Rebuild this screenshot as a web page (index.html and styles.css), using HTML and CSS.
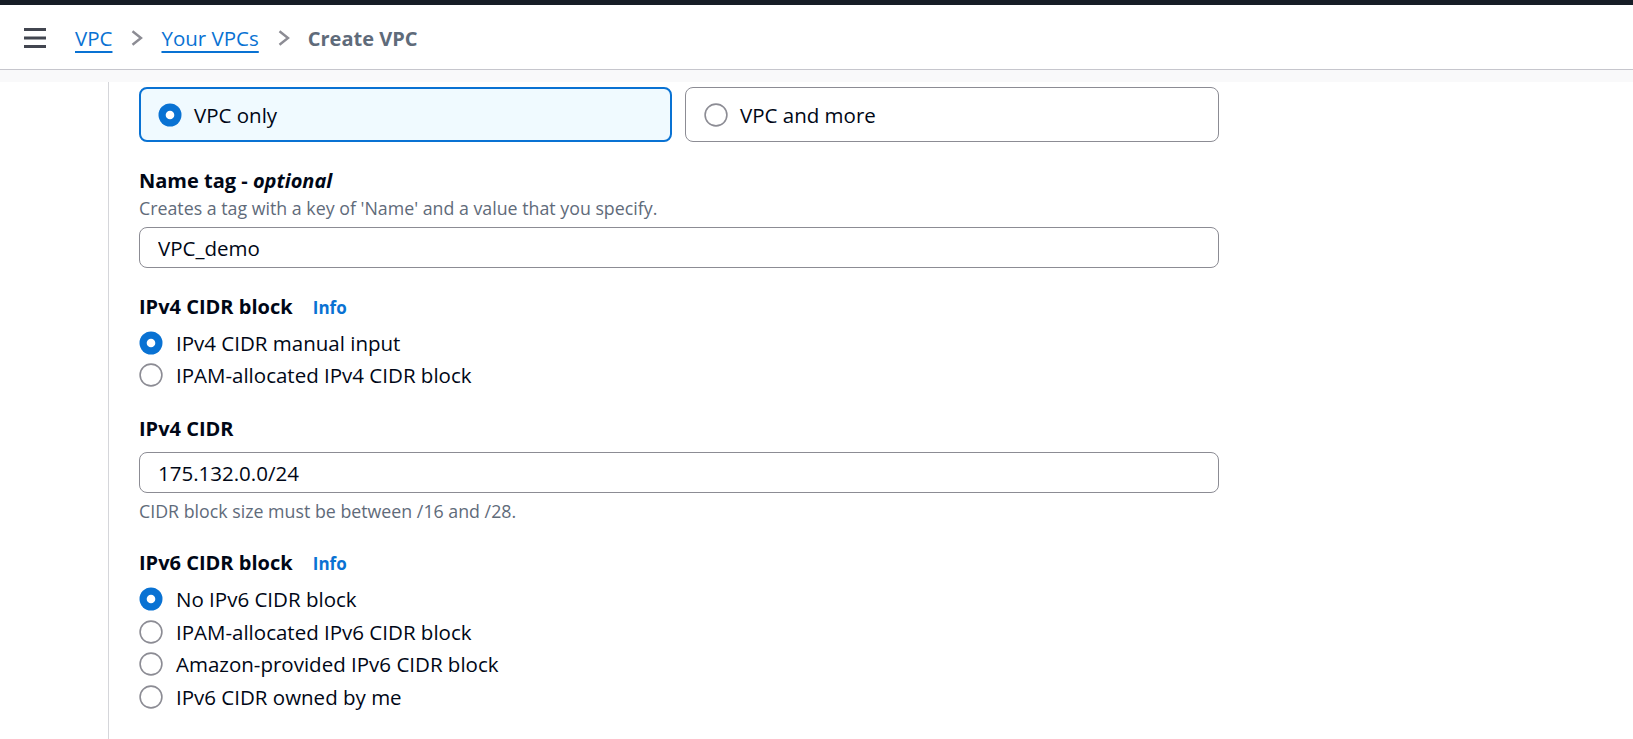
FILE: index.html
```html
<!DOCTYPE html>
<html lang="en">
<head>
<meta charset="utf-8">
<title>Create VPC</title>
<link rel="stylesheet" href="styles.css">
</head>
<body>
<div class="topbar"></div>
<header class="header">
  <svg class="menu-icon" width="22" height="20" viewBox="0 0 22 20" aria-hidden="true">
    <path d="M0 1.5H22M0 10H22M0 18.5H22" stroke="#424650" stroke-width="3" fill="none"/>
  </svg>
  <nav class="breadcrumbs">
    <a class="crumb-link" href="#">VPC</a>
    <svg class="chevron" width="12" height="16" viewBox="0 0 12 16" aria-hidden="true"><path d="M1.5 1.2L10 8L1.5 14.8" stroke="#8c8c94" stroke-width="2.4" fill="none"/></svg>
    <a class="crumb-link" href="#">Your VPCs</a>
    <svg class="chevron" width="12" height="16" viewBox="0 0 12 16" aria-hidden="true"><path d="M1.5 1.2L10 8L1.5 14.8" stroke="#8c8c94" stroke-width="2.4" fill="none"/></svg>
    <span class="crumb-current">Create VPC</span>
  </nav>
</header>
<div class="band"></div>
<main class="main">
  <div class="rail"></div>
  <section class="content">
    <div class="form">
      <div class="tiles">
        <div class="tile tile-selected">
          <svg class="radio" width="24" height="24" viewBox="0 0 24 24"><circle cx="12" cy="12" r="11.5" fill="#0972d3"/><circle cx="12" cy="12" r="4.3" fill="#fff"/></svg>
          <span class="radio-label">VPC only</span>
        </div>
        <div class="tile">
          <svg class="radio" width="24" height="24" viewBox="0 0 24 24"><circle cx="12" cy="12" r="10.9" fill="#fff" stroke="#8c8c94" stroke-width="1.6"/></svg>
          <span class="radio-label">VPC and more</span>
        </div>
      </div>

      <div class="field field-name">
        <div class="label">Name tag - <em>optional</em></div>
        <div class="description">Creates a tag with a key of 'Name' and a value that you specify.</div>
        <input class="text-input input-name" type="text" value="VPC_demo" readonly>
      </div>

      <div class="field field-ipv4">
        <div class="label">IPv4 CIDR block <a class="info" href="#">Info</a></div>
        <div class="radio-group">
          <div class="radio-row">
            <svg class="radio" width="24" height="24" viewBox="0 0 24 24"><circle cx="12" cy="12" r="11.5" fill="#0972d3"/><circle cx="12" cy="12" r="4.3" fill="#fff"/></svg>
            <span class="radio-label">IPv4 CIDR manual input</span>
          </div>
          <div class="radio-row">
            <svg class="radio" width="24" height="24" viewBox="0 0 24 24"><circle cx="12" cy="12" r="10.9" fill="#fff" stroke="#8c8c94" stroke-width="1.6"/></svg>
            <span class="radio-label">IPAM-allocated IPv4 CIDR block</span>
          </div>
        </div>
      </div>

      <div class="field field-cidr">
        <div class="label">IPv4 CIDR</div>
        <input class="text-input input-cidr" type="text" value="175.132.0.0/24" readonly>
        <div class="constraint">CIDR block size must be between /16 and /28.</div>
      </div>

      <div class="field field-ipv6">
        <div class="label">IPv6 CIDR block <a class="info" href="#">Info</a></div>
        <div class="radio-group">
          <div class="radio-row">
            <svg class="radio" width="24" height="24" viewBox="0 0 24 24"><circle cx="12" cy="12" r="11.5" fill="#0972d3"/><circle cx="12" cy="12" r="4.3" fill="#fff"/></svg>
            <span class="radio-label">No IPv6 CIDR block</span>
          </div>
          <div class="radio-row">
            <svg class="radio" width="24" height="24" viewBox="0 0 24 24"><circle cx="12" cy="12" r="10.9" fill="#fff" stroke="#8c8c94" stroke-width="1.6"/></svg>
            <span class="radio-label">IPAM-allocated IPv6 CIDR block</span>
          </div>
          <div class="radio-row">
            <svg class="radio" width="24" height="24" viewBox="0 0 24 24"><circle cx="12" cy="12" r="10.9" fill="#fff" stroke="#8c8c94" stroke-width="1.6"/></svg>
            <span class="radio-label">Amazon-provided IPv6 CIDR block</span>
          </div>
          <div class="radio-row">
            <svg class="radio" width="24" height="24" viewBox="0 0 24 24"><circle cx="12" cy="12" r="10.9" fill="#fff" stroke="#8c8c94" stroke-width="1.6"/></svg>
            <span class="radio-label">IPv6 CIDR owned by me</span>
          </div>
        </div>
      </div>
    </div>
  </section>
</main>
</body>
</html>
```
FILE: styles.css
```css
* { box-sizing: border-box; }
html, body { margin: 0; padding: 0; }
body {
  font-family: "Open Sans", "Noto Sans", sans-serif;
  color: #000716;
  background: #fff;
  overflow: hidden;
  height: 739px;
}
.topbar { height: 5px; background: #161d26; }
.header {
  height: 65px;
  display: flex;
  align-items: center;
  padding-left: 24px;
  padding-top: 2px;
  border-bottom: 1px solid #c6c6cd;
}
.menu-icon { display: block; flex: none; }
.breadcrumbs {
  display: flex;
  align-items: center;
  margin-left: 29px;
  font-size: 20.5px;
}
.crumb-link {
  color: #0972d3;
  text-decoration: underline;
  text-decoration-thickness: 2px;
  text-underline-offset: 5px;
}
.chevron { display: block; margin: 0 18px 0 19px; flex: none; }
.crumb-current { color: #5f6b7a; font-weight: 700; font-size: 20px; }
.band { height: 12px; background: #f9f9fa; }
.main { display: flex; height: 657px; }
.rail { width: 108px; flex: none; }
.content {
  flex: 1;
  border-left: 1px solid #d5d6da;
  padding-left: 30px;
  padding-top: 5px;
}
.form { width: 1080px; }
.tiles {
  display: grid;
  grid-template-columns: 533px 534px;
  column-gap: 13px;
}
.tile {
  height: 55px;
  display: flex;
  align-items: center;
  border: 1px solid #8c8c94;
  border-radius: 8px;
  padding-left: 18px;
  padding-top: 1px;
}
.tile-selected {
  border: 2px solid #0972d3;
  background: #f0faff;
  padding-left: 17px;
}
.radio { display: block; flex: none; }
.radio-label {
  margin-left: 12px;
  font-size: 20.5px;
  line-height: 30px;
}
.field-name { margin-top: 24px; }
.field-name .label { line-height: 29px; }
.field-ipv4 { margin-top: 24px; }
.field-cidr { margin-top: 24px; }
.field-ipv6 { margin-top: 23px; }
.label {
  font-weight: 700;
  font-size: 20px;
  line-height: 30px;
  color: #000716;
}
.label em { font-style: italic; font-weight: 700; }
.info {
  color: #0972d3;
  font-size: 17px;
  font-weight: 700;
  text-decoration: none;
  margin-left: 15px;
}
.description, .constraint {
  font-size: 17.8px;
  line-height: 27px;
  color: #5f6b7a;
}
.text-input {
  display: block;
  width: 1080px;
  height: 41px;
  border: 1px solid #8c8c94;
  border-radius: 8px;
  padding: 0 18px;
  font-family: "Open Sans", "Noto Sans", sans-serif;
  font-size: 20.5px;
  color: #000716;
  background: #fff;
  outline: none;
}
.input-name { margin-top: 5px; }
.input-cidr { margin-top: 8px; }
.constraint { margin-top: 5px; }
.radio-group {
  display: flex;
  flex-direction: column;
  row-gap: 2.4px;
  margin-top: 5px;
}
.field-ipv6 .radio-group { margin-top: 5px; }
.radio-row {
  display: flex;
  align-items: center;
  height: 30px;
}
.radio-row .radio-label { margin-left: 13px; }
```
